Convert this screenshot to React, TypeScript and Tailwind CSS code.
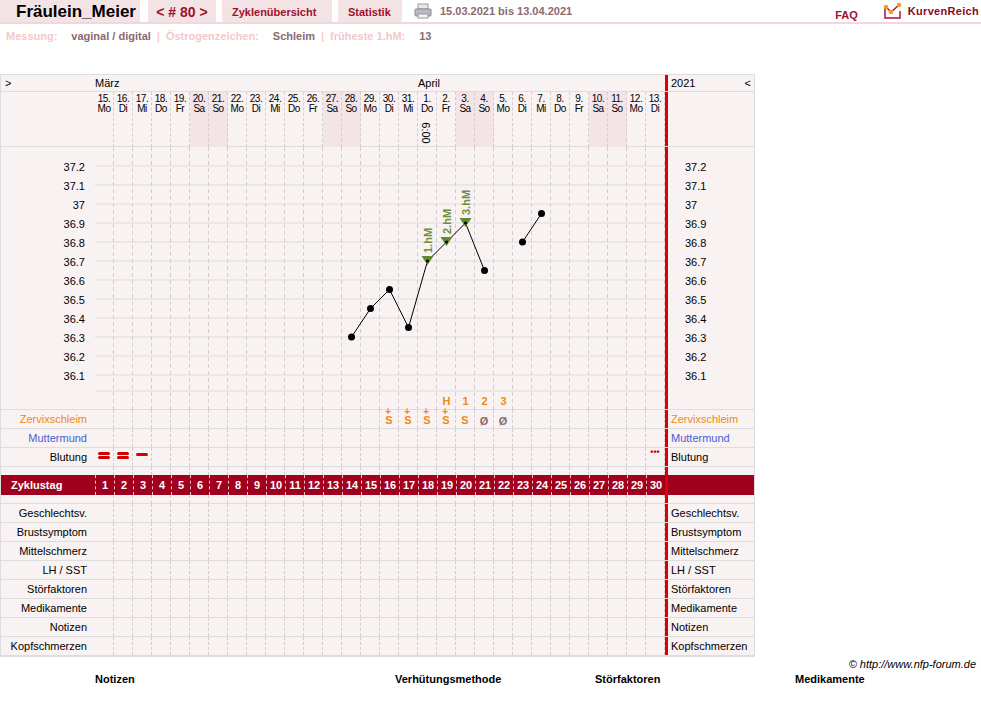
import React from 'react';

const days = Array.from({ length: 30 }, (_, i) => {
  const wd = ['Mo', 'Di', 'Mi', 'Do', 'Fr', 'Sa', 'So'][i % 7];
  const date = i < 17 ? 15 + i : i - 16;
  return { date, wd, weekend: wd === 'Sa' || wd === 'So' };
});

const temps = [37.2, 37.1, 37, 36.9, 36.8, 36.7, 36.6, 36.5, 36.4, 36.3, 36.2, 36.1];
const points: [number, number][][] = [
  [[14, 36.3], [15, 36.45], [16, 36.55], [17, 36.35], [18, 36.7], [19, 36.8], [20, 36.9], [21, 36.65]],
  [[23, 36.8], [24, 36.95]],
];
const px = (d: number) => (d - 1) * 19 + 9.5;
const py = (t: number) => 19 + (37.2 - t) * 190;

const font = { fontFamily: '"Liberation Sans", Arial, sans-serif' };

function Row({ label, cls = 'text-black', children }: { label: string; cls?: string; children?: (i: number) => React.ReactNode }) {
  return (
    <div className="flex border-b border-[#dddddd]">
      <div className={`w-[94px] h-[18px] text-right pr-2 text-[11px] leading-[18px] ${cls}`}>{label}</div>
      <div className="flex">
        {days.map((_, i) => (
          <div key={i} className="w-[19px] h-[18px] border-r border-dashed border-[#d6cccc] flex items-center justify-center">
            {children ? children(i) : null}
          </div>
        ))}
      </div>
      <div className="w-[3px] bg-[#dd0000]" />
      <div className={`flex-1 pl-[3px] text-[11px] leading-[18px] ${cls}`}>{label}</div>
    </div>
  );
}

export default function App() {
  return (
    <div className="w-[981px] h-[718px] bg-white text-black" style={font}>
      {/* top bar */}
      <div className="flex items-stretch h-[24px] border-b-2 border-[#f0d8dc]">
        <div className="w-[140px] bg-[#f3e3e5] pl-4 text-[17px] font-bold leading-[24px]">Fräulein_Meier</div>
        <div className="ml-2 w-[68px] bg-[#f3e3e5] text-center text-[14px] font-bold text-[#a0102a] leading-[24px]">&lt; # 80 &gt;</div>
        <div className="ml-[6px] w-[110px] bg-[#f3e3e5] pl-[10px] text-[11px] font-bold text-[#a0102a] leading-[24px]">Zyklenübersicht</div>
        <div className="ml-[6px] w-[64px] bg-[#f3e3e5] pl-[10px] text-[11px] font-bold text-[#a0102a] leading-[24px]">Statistik</div>
        <div className="ml-[12px] flex items-center gap-2">
          <svg width="18" height="16" viewBox="0 0 18 16">
            <rect x="4" y="1" width="10" height="5" fill="#e8e8e8" stroke="#999" />
            <rect x="1" y="6" width="16" height="7" rx="1" fill="#b8bcc4" stroke="#888" />
            <rect x="4" y="11" width="10" height="4" fill="#f4f4f4" stroke="#999" />
          </svg>
          <span className="text-[11px] font-bold text-[#8a6a70]">15.03.2021 bis 13.04.2021</span>
        </div>
        <div className="ml-auto flex items-center">
          <span className="text-[11px] font-bold text-[#a0102a] mt-2 mr-6">FAQ</span>
          <svg width="22" height="18" viewBox="0 0 22 18" className="mr-1">
            <path d="M3 5 L3 16 L18 16 L18 9" fill="none" stroke="#b01040" strokeWidth="1.5" />
            <path d="M4 5 L9 10 L17 3" fill="none" stroke="#b01040" strokeWidth="1.5" />
            <circle cx="4" cy="5" r="2.3" fill="#f0a020" />
            <circle cx="9" cy="10" r="2.3" fill="#f0a020" />
            <circle cx="17" cy="3" r="2.3" fill="#f0a020" />
          </svg>
          <span className="text-[11px] font-bold text-[#8a0a20] mr-[2px] tracking-[0.3px]">KurvenReich</span>
        </div>
      </div>
      <div className="h-[24px] flex items-center pl-[6px] text-[11px] font-bold gap-[6px]">
        <span className="text-[#f3c8cc]">Messung:</span>
        <span className="text-[#8a6a70] ml-2">vaginal / digital</span>
        <span className="text-[#f0d0d4]">|</span>
        <span className="text-[#f3c8cc]">Östrogenzeichen:</span>
        <span className="text-[#8a6a70] ml-2">Schleim</span>
        <span className="text-[#f0d0d4]">|</span>
        <span className="text-[#f3c8cc]">früheste 1.hM:</span>
        <span className="text-[#8a6a70] ml-2">13</span>
      </div>

      {/* chart table */}
      <div className="mt-[26px] w-[755px] border border-[#dddddd] bg-[#f8f2f2]">
        {/* month row */}
        <div className="flex h-[17px] border-b border-[#dddddd] text-[11px] leading-[17px]">
          <div className="w-[94px] pl-1">&gt;</div>
          <div className="w-[323px]">März</div>
          <div className="w-[247px]">April</div>
          <div className="w-[3px] bg-[#dd0000]" />
          <div className="flex-1 flex justify-between px-[3px]">
            <span>2021</span>
            <span>&lt;</span>
          </div>
        </div>
        {/* date row */}
        <div className="flex h-[55px] border-b border-[#dddddd]">
          <div className="w-[94px]" />
          <div className="flex">
            {days.map((d, i) => (
              <div
                key={i}
                className={`relative w-[19px] h-[55px] border-r border-dashed border-[#d6cccc] flex flex-col items-center pt-[2px] text-[10px] leading-[10px] tracking-[-0.5px] ${d.weekend ? 'bg-[#f3e5e7]' : ''}`}
              >
                <span>{d.date}.</span>
                <span>{d.wd}</span>
                {i === 17 && (
                  <span className="absolute left-[-3px] top-[36px] rotate-90 whitespace-nowrap text-[11px] tracking-normal">6:00</span>
                )}
              </div>
            ))}
          </div>
          <div className="w-[3px] bg-[#dd0000]" />
          <div className="flex-1" />
        </div>
        {/* temperature chart */}
        <div className="flex h-[263px] border-b border-[#dddddd]">
          <div className="w-[94px] relative text-[11px]">
            {temps.map((t) => (
              <span key={t} className="absolute right-[10px]" style={{ top: py(t) - 7 }}>{t}</span>
            ))}
          </div>
          <div className="relative w-[570px]">
            <svg width="570" height="263" className="absolute inset-0">
              {temps.map((t) => (
                <line key={t} x1="0" x2="570" y1={py(t)} y2={py(t)} stroke="#dddddd" />
              ))}
              <line x1="0" x2="570" y1="244" y2="244" stroke="#dddddd" />
              {days.map((_, i) => (
                <line key={i} x1={i * 19 + 18.5} x2={i * 19 + 18.5} y1="0" y2="263" stroke="#d6cccc" strokeDasharray="4 3" />
              ))}
              {points.map((seg, k) => (
                <polyline key={k} fill="none" stroke="#000" strokeWidth="1" points={seg.map(([d, t]) => `${px(d)},${py(t)}`).join(' ')} />
              ))}
              {points.flat().map(([d, t]) =>
                d >= 18 && d <= 20 ? (
                  <g key={d}>
                    <polygon points={`${px(d) - 6},${py(t) - 5} ${px(d) + 6},${py(t) - 5} ${px(d)},${py(t) + 4}`} fill="#5e8a30" />
                    <circle cx={px(d)} cy={py(t)} r="1.5" fill="#000" />
                    <text
                      x={px(d) + 4}
                      y={py(t) - 8}
                      transform={`rotate(-90 ${px(d) + 4} ${py(t) - 8})`}
                      fontSize="11"
                      fontWeight="bold"
                      fill="#6a9040"
                      style={font}
                    >
                      {d - 17}.hM
                    </text>
                  </g>
                ) : (
                  <circle key={d} cx={px(d)} cy={py(t)} r="3.5" fill="#000" />
                )
              )}
              {['H', '1', '2', '3'].map((c, i) => (
                <text key={c} x={px(19 + i)} y="258" textAnchor="middle" fontSize="11" fontWeight="bold" fill="#f08a10" style={font}>
                  {c}
                </text>
              ))}
            </svg>
          </div>
          <div className="w-[3px] bg-[#dd0000]" />
          <div className="flex-1 relative text-[11px]">
            {temps.map((t) => (
              <span key={t} className="absolute left-[17px]" style={{ top: py(t) - 7 }}>{t}</span>
            ))}
          </div>
        </div>
        <Row label="Zervixschleim" cls="text-[#f08a10]">
          {(i) =>
            i >= 15 && i <= 19 ? (
              <span className="relative flex items-center text-[#f08a10] font-bold text-[11px] leading-[11px] mt-[3px]">
                S
                {i < 19 && <span className="absolute left-[0px] -top-[8px] text-[10px] leading-[10px]">+</span>}
              </span>
            ) : i === 20 || i === 21 ? (
              <span className="text-[#8a6a6a] font-bold text-[11px] mt-[4px]">Ø</span>
            ) : null
          }
        </Row>
        <Row label="Muttermund" cls="text-[#4a60d0]" />
        <Row label="Blutung">
          {(i) =>
            i < 2 ? (
              <span className="flex flex-col gap-[1px] -mt-[4px]">
                <span className="w-[12px] h-[3px] rounded-full bg-[#d00000]" />
                <span className="w-[12px] h-[3px] rounded-full bg-[#d00000]" />
              </span>
            ) : i === 2 ? (
              <span className="w-[12px] h-[3px] rounded-full bg-[#d00000] -mt-[6px]" />
            ) : i === 29 ? (
              <span className="text-[#d00000] text-[9px] font-bold -mt-[8px]">•••</span>
            ) : null
          }
        </Row>
        <div className="flex h-[8px]">
          <div className="w-[94px]" />
          <div className="flex">
            {days.map((_, i) => (
              <div key={i} className="w-[19px] h-[8px] border-r border-dashed border-[#d6cccc]" />
            ))}
          </div>
          <div className="w-[3px] bg-[#dd0000]" />
        </div>
        <div className="flex h-[20px] bg-[#a0001e] text-white font-bold text-[11px] leading-[20px]">
          <div className="w-[94px] pl-[10px]">Zyklustag</div>
          <div className="flex">
            {days.map((_, i) => (
              <div key={i} className="w-[19px] border-l border-dashed border-[#f0c0c8] text-center">{i + 1}</div>
            ))}
          </div>
          <div className="w-[3px] bg-[#dd0000]" />
        </div>
        <div className="flex h-[9px] border-b border-[#dddddd]">
          <div className="w-[94px]" />
          <div className="flex">
            {days.map((_, i) => (
              <div key={i} className="w-[19px] h-[9px] border-r border-dashed border-[#d6cccc]" />
            ))}
          </div>
          <div className="w-[3px] bg-[#dd0000]" />
        </div>
        {['Geschlechtsv.', 'Brustsymptom', 'Mittelschmerz', 'LH / SST', 'Störfaktoren', 'Medikamente', 'Notizen', 'Kopfschmerzen'].map((l) => (
          <Row key={l} label={l} />
        ))}
      </div>
      <div className="w-[976px] text-right text-[11px] italic mt-[1px] leading-[13px]">© http://www.nfp-forum.de</div>
      <div className="flex text-[11px] font-bold">
        <span className="ml-[95px] w-[300px]">Notizen</span>
        <span className="w-[200px]">Verhütungsmethode</span>
        <span className="w-[200px]">Störfaktoren</span>
        <span>Medikamente</span>
      </div>
    </div>
  );
}
